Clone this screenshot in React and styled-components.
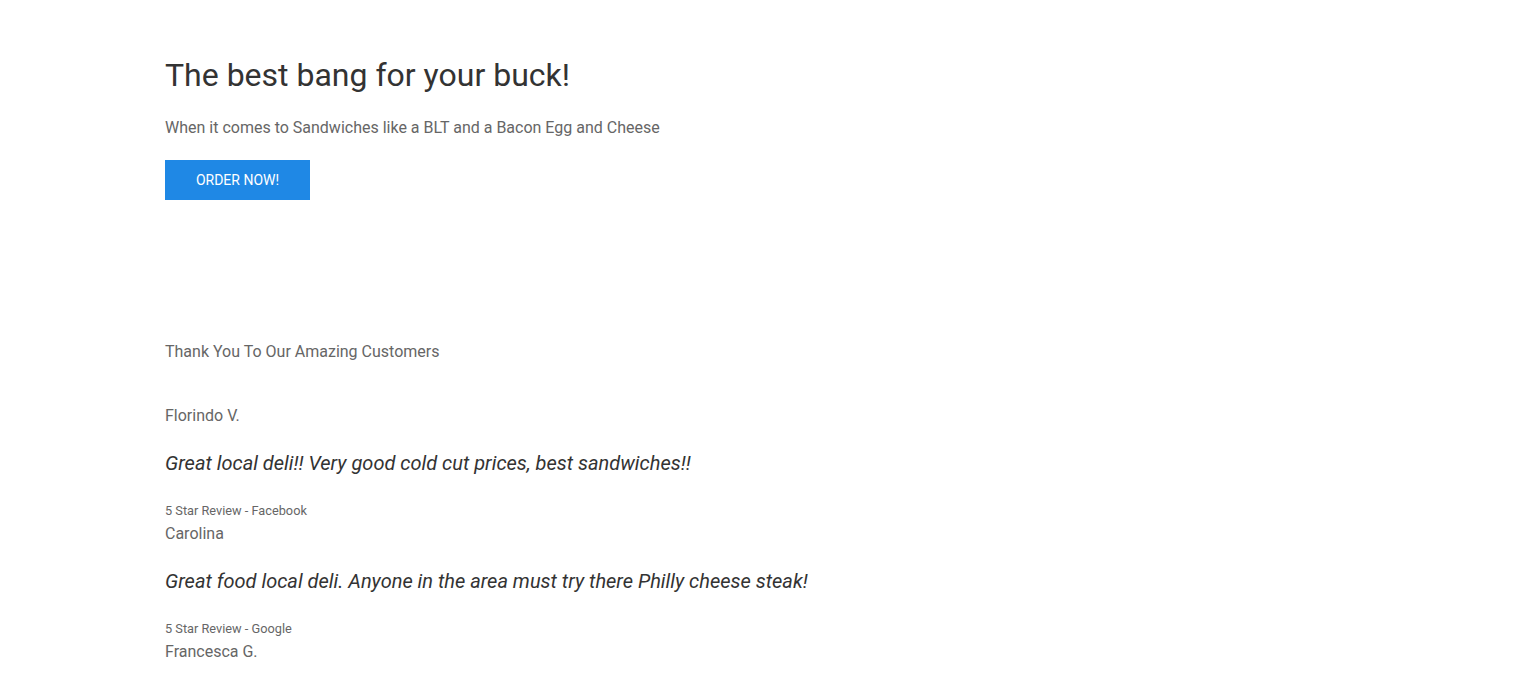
import React from "react";
import styled, { createGlobalStyle } from "styled-components";

const Global = createGlobalStyle`
  html, body { margin: 0; padding: 0; background: #fff; }
  body { font-family: Roboto, "Liberation Sans", Arial, sans-serif; }
`;

const Page = styled.main`
  padding: 56px 165px 0;
  display: flex;
  flex-direction: column;
`;

const Hero = styled.section`
  display: flex;
  flex-direction: column;
  align-items: flex-start;
`;

const Title = styled.h1`
  margin: 0;
  font-size: 32px;
  line-height: 38px;
  font-weight: 400;
  color: #333;
`;

const Lead = styled.p`
  margin: 22px 0 0;
  font-size: 16px;
  line-height: 24px;
  color: #666;
`;

const OrderButton = styled.button`
  margin-top: 20px;
  width: 145px;
  height: 40px;
  border: 0;
  background: #1f88e5;
  color: #fff;
  font-family: inherit;
  font-size: 14px;
  text-transform: uppercase;
  cursor: pointer;
`;

const Reviews = styled.section`
  margin-top: 140px;
  display: flex;
  flex-direction: column;
`;

const SectionTitle = styled.h2`
  margin: 0 0 40px;
  font-size: 16px;
  line-height: 24px;
  font-weight: 400;
  color: #666;
`;

const Review = styled.article`
  display: flex;
  flex-direction: column;
  margin-bottom: 2px;
`;

const Name = styled.div`
  font-size: 16px;
  line-height: 24px;
  color: #666;
  margin-bottom: 21px;
`;

const Quote = styled.blockquote`
  margin: 0 0 25px;
  font-size: 20px;
  line-height: 28px;
  font-style: italic;
  color: #333;
`;

const Source = styled.div`
  font-size: 12.75px;
  line-height: 18px;
  color: #666;
`;

const reviews = [
  { name: "Florindo V.", quote: "Great local deli!! Very good cold cut prices, best sandwiches!!", source: "5 Star Review - Facebook" },
  { name: "Carolina", quote: "Great food local deli. Anyone in the area must try there Philly cheese steak!", source: "5 Star Review - Google" },
  { name: "Francesca G.", quote: "", source: "" },
];

export default function App() {
  return (
    <>
      <Global />
      <Page>
        <Hero>
          <Title>The best bang for your buck!</Title>
          <Lead>When it comes to Sandwiches like a BLT and a Bacon Egg and Cheese</Lead>
          <OrderButton>Order Now!</OrderButton>
        </Hero>
        <Reviews>
          <SectionTitle>Thank You To Our Amazing Customers</SectionTitle>
          {reviews.map((r) => (
            <Review key={r.name}>
              <Name>{r.name}</Name>
              {r.quote && <Quote>{r.quote}</Quote>}
              {r.source && <Source>{r.source}</Source>}
            </Review>
          ))}
        </Reviews>
      </Page>
    </>
  );
}
